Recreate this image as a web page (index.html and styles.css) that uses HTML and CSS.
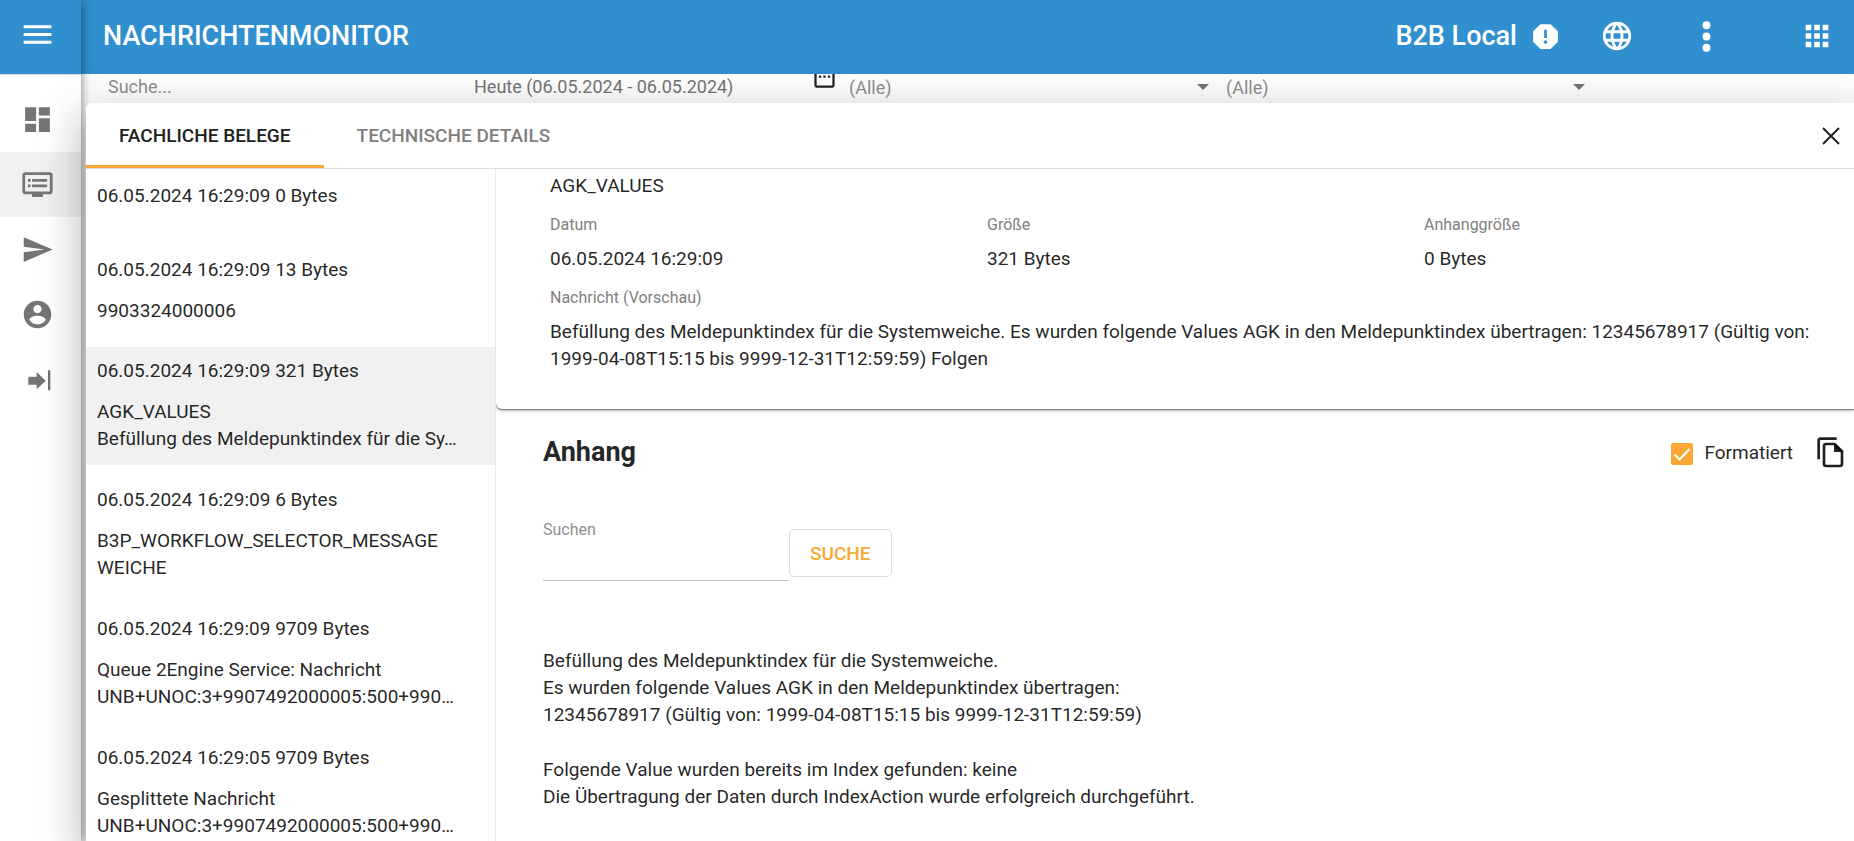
FILE: index.html
```html
<!DOCTYPE html>
<html lang="de">
<head>
<meta charset="utf-8">
<title>Nachrichtenmonitor</title>
<link rel="stylesheet" href="styles.css">
</head>
<body>
<div class="app">
  <aside class="sidebar">
    <div class="sidebar-head">
      <button class="icon-button" type="button" aria-label="Menü">
        <svg class="icon-lg" viewBox="0 0 24 24"><path d="M3 18h18v-2H3v2zm0-5h18v-2H3v2zm0-7v2h18V6H3z"/></svg>
      </button>
    </div>
    <nav class="nav">
      <a class="nav-item" href="#dashboard" aria-label="Dashboard">
        <svg class="icon" viewBox="0 0 24 24"><path d="M3 13h8V3H3v10zm0 8h8v-6H3v6zm10 0h8V11h-8v10zm0-18v6h8V3h-8z"/></svg>
      </a>
      <a class="nav-item nav-item-active" href="#monitor" aria-label="Nachrichtenmonitor">
        <svg class="icon" viewBox="0 0 24 24"><path d="M21 3H3c-1.1 0-2 .9-2 2v12c0 1.100.9 2 2 2h5v2h8v-2h5c1.100 0 2-.9 2-2V5c0-1.100-.9-2-2-2zm0 14H3V5h18v12zm-2-9H8v2h11V8zm0 4H8v2h11v-2zM7 8H5v2h2V8zm0 4H5v2h2v-2z"/></svg>
      </a>
      <a class="nav-item" href="#senden" aria-label="Senden">
        <svg class="icon" viewBox="0 0 24 24"><path d="M2 21L23 12 2 3v7l15 2-15 2z"/></svg>
      </a>
      <a class="nav-item" href="#konto" aria-label="Konto">
        <svg class="icon" viewBox="0 0 24 24"><path d="M12 2C6.480 2 2 6.480 2 12s4.480 10 10 10 10-4.480 10-10S17.520 2 12 2zm0 3c1.660 0 3 1.340 3 3s-1.340 3-3 3-3-1.340-3-3 1.340-3 3-3zm0 14.200c-2.500 0-4.710-1.280-6-3.220.03-1.990 4-3.080 6-3.080 1.990 0 5.970 1.090 6 3.080-1.290 1.940-3.500 3.220-6 3.220z"/></svg>
      </a>
      <a class="nav-item" href="#abmelden" aria-label="Abmelden">
        <svg class="icon" viewBox="0 0 99 99"><path d="M22 41h25V27l27 26-27 26V65H22zM81 22h7v60h-7z"/></svg>
      </a>
    </nav>
  </aside>

  <div class="main">
    <header class="topbar">
      <h1 class="topbar-title">NACHRICHTENMONITOR</h1>
      <div class="tenant">
        <span>B2B Local</span>
        <svg class="icon" viewBox="0 0 24 24"><path d="M15.730 3H8.270L3 8.270v7.460L8.270 21h7.460L21 15.730V8.270L15.730 3zM12 17.300c-.72 0-1.300-.58-1.300-1.300s.58-1.300 1.300-1.300 1.300.58 1.300 1.300-.58 1.300-1.300 1.300zm1-4.300h-2V7h2v6z"/></svg>
      </div>
      <div class="topbar-actions">
        <button class="icon-button" type="button" aria-label="Sprache">
          <svg class="icon-md" viewBox="0 0 24 24"><path d="M12 2C6.480 2 2 6.480 2 12s4.480 10 10 10 10-4.480 10-10S17.520 2 12 2zm6.930 6h-2.950c-.32-1.250-.78-2.450-1.380-3.560 1.840.63 3.370 1.910 4.330 3.560zM12 4.040c.83 1.200 1.480 2.530 1.910 3.960h-3.820c.43-1.430 1.080-2.760 1.910-3.960zM4.260 14C4.100 13.360 4 12.690 4 12s.1-1.360.26-2h3.380c-.08.66-.14 1.320-.14 2s.06 1.340.14 2H4.260zm.82 2h2.950c.32 1.250.78 2.450 1.380 3.560-1.840-.63-3.370-1.900-4.330-3.560zm2.950-8H5.080c.96-1.660 2.490-2.930 4.330-3.560C8.810 5.550 8.350 6.750 8.030 8zM12 19.960c-.83-1.200-1.480-2.530-1.910-3.960h3.820c-.43 1.430-1.080 2.760-1.910 3.960zM14.340 14H9.660c-.09-.66-.16-1.320-.16-2s.07-1.350.16-2h4.680c.09.65.16 1.320.16 2s-.07 1.340-.16 2zm.25 5.560c.6-1.110 1.060-2.310 1.380-3.560h2.950c-.96 1.650-2.490 2.930-4.330 3.560zM16.360 14c.08-.66.14-1.320.14-2s-.06-1.340-.14-2h3.380c.16.64.26 1.310.26 2s-.1 1.360-.26 2h-3.380z"/></svg>
        </button>
        <button class="icon-button more" type="button" aria-label="Mehr">
          <svg class="icon-xl" viewBox="0 0 24 24"><circle cx="12" cy="6" r="2.100"/><circle cx="12" cy="12" r="2.100"/><circle cx="12" cy="18" r="2.100"/></svg>
        </button>
        <button class="icon-button" type="button" aria-label="Apps">
          <svg class="icon-md" viewBox="0 0 24 24"><path d="M4 8h4V4H4v4zm6 12h4v-4h-4v4zm-6 0h4v-4H4v4zm0-6h4v-4H4v4zm6 0h4v-4h-4v4zm6-10v4h4V4h-4zm-6 4h4V4h-4v4zm6 6h4v-4h-4v4zm0 6h4v-4h-4v4z"/></svg>
        </button>
      </div>
    </header>

    <div class="workspace">
      <form class="filters">
        <input class="filter-input" type="text" placeholder="Suche..." aria-label="Suche">
        <div class="filter filter-range">
          <input class="filter-input filter-date" type="text" value="Heute (06.05.2024 - 06.05.2024)" aria-label="Zeitraum">
          <svg class="calendar" viewBox="0 0 24 24"><path d="M9 11H7v2h2v-2zm4 0h-2v2h2v-2zm4 0h-2v2h2v-2zm2-7h-1V2h-2v2H8V2H6v2H5c-1.100 0-2 .9-2 2v14c0 1.100.9 2 2 2h14c1.100 0 2-.9 2-2V6c0-1.100-.9-2-2-2zm0 16H5V9h14v11z"/></svg>
        </div>
        <div class="filter">
          <select class="filter-input" aria-label="Status"><option>(Alle)</option></select>
          <svg class="caret" viewBox="0 0 12 6"><path d="M0 0h12L6 6z"/></svg>
        </div>
        <div class="filter">
          <select class="filter-input" aria-label="Typ"><option>(Alle)</option></select>
          <svg class="caret" viewBox="0 0 12 6"><path d="M0 0h12L6 6z"/></svg>
        </div>
      </form>
    </div>

    <section class="dialog" role="dialog" aria-label="Nachrichtendetails">
      <div class="tabs" role="tablist">
        <button class="tab tab-active" type="button" role="tab" aria-selected="true">FACHLICHE BELEGE</button>
        <button class="tab" type="button" role="tab" aria-selected="false">TECHNISCHE DETAILS</button>
        <button class="icon-button close" type="button" aria-label="Schließen">
          <svg class="close-icon" viewBox="0 0 18 18"><path d="M1 1l16 16M17 1L1 17"/></svg>
        </button>
      </div>
      <div class="dialog-body">
        <ul class="messages">
          <li class="message">
            <p class="message-meta">06.05.2024 16:29:09 0 Bytes</p>
          </li>
          <li class="message">
            <p class="message-meta">06.05.2024 16:29:09 13 Bytes</p>
            <p class="message-name">9903324000006</p>
          </li>
          <li class="message message-active">
            <p class="message-meta">06.05.2024 16:29:09 321 Bytes</p>
            <p class="message-name">AGK_VALUES</p>
            <p class="message-preview">Befüllung des Meldepunktindex für die Sy…</p>
          </li>
          <li class="message">
            <p class="message-meta">06.05.2024 16:29:09 6 Bytes</p>
            <p class="message-name">B3P_WORKFLOW_SELECTOR_MESSAGE</p>
            <p class="message-preview">WEICHE</p>
          </li>
          <li class="message">
            <p class="message-meta">06.05.2024 16:29:09 9709 Bytes</p>
            <p class="message-name">Queue 2Engine Service: Nachricht</p>
            <p class="message-preview">UNB+UNOC:3+9907492000005:500+990…</p>
          </li>
          <li class="message">
            <p class="message-meta">06.05.2024 16:29:05 9709 Bytes</p>
            <p class="message-name">Gesplittete Nachricht</p>
            <p class="message-preview">UNB+UNOC:3+9907492000005:500+990…</p>
          </li>
        </ul>

        <div class="detail">
          <div class="card">
            <p class="card-name">AGK_VALUES</p>
            <dl class="facts">
              <div class="fact"><dt>Datum</dt><dd>06.05.2024 16:29:09</dd></div>
              <div class="fact"><dt>Größe</dt><dd>321 Bytes</dd></div>
              <div class="fact"><dt>Anhanggröße</dt><dd>0 Bytes</dd></div>
              <div class="fact fact-wide"><dt>Nachricht (Vorschau)</dt><dd>Befüllung des Meldepunktindex für die Systemweiche. Es wurden folgende Values AGK in den Meldepunktindex übertragen: 12345678917 (Gültig von: 1999-04-08T15:15 bis 9999-12-31T12:59:59) Folgen</dd></div>
            </dl>
          </div>

          <div class="attachment">
            <div class="attachment-head">
              <h2 class="attachment-title">Anhang</h2>
              <label class="check"><input class="check-box" type="checkbox" checked>Formatiert</label>
              <button class="icon-button" type="button" aria-label="Kopieren">
                <svg class="copy-icon" viewBox="0 0 81 93"><path class="copy-line" d="M5 67V11Q5 5 11 5H59"/><path class="copy-line" d="M27 21H53L75 43V81Q75 87 69 87H27Q21 87 21 81V27Q21 21 27 21z"/><path d="M51 18v27h27z"/></svg>
              </button>
            </div>
            <form class="search">
              <div class="search-field">
                <label class="search-label" for="suchen">Suchen</label>
                <input class="search-input" id="suchen" type="text">
              </div>
              <button class="search-button" type="button">SUCHE</button>
            </form>
            <div class="content">
              <p>Befüllung des Meldepunktindex für die Systemweiche.<br>Es wurden folgende Values AGK in den Meldepunktindex übertragen:<br>12345678917 (Gültig von: 1999-04-08T15:15 bis 9999-12-31T12:59:59)</p>
              <p>Folgende Value wurden bereits im Index gefunden: keine<br>Die Übertragung der Daten durch IndexAction wurde erfolgreich durchgeführt.</p>
            </div>
          </div>
        </div>
      </div>
    </section>
  </div>
</div>
</body>
</html>
```
FILE: styles.css
```css
*, *::before, *::after { box-sizing: border-box; }

body {
  margin: 0;
  background: #fff;
  color: rgba(0, 0, 0, .87);
  font: 400 19px/27px Roboto, "Liberation Sans", sans-serif;
}

h1, h2, p, ul, dl, dd { margin: 0; padding: 0; }
ul { list-style: none; }
svg { display: block; fill: currentColor; flex: none; }
button, input, select { font: inherit; color: inherit; }

.icon { width: 33px; height: 33px; }
.icon-md { width: 34px; height: 34px; }
.icon-lg { width: 37px; height: 37px; }
.icon-xl { width: 45px; height: 45px; }

.icon-button {
  padding: 0;
  border: 0;
  background: none;
  cursor: pointer;
}

.app {
  display: grid;
  grid-template-columns: 81px 1fr;
  height: 100vh;
  overflow: hidden;
}

/* Sidebar */
.sidebar {
  position: relative;
  z-index: 1;
  background: #fff;
  color: #757575;
  box-shadow: 0 0 10px rgba(0, 0, 0, .5);
}

.sidebar-head {
  position: relative;
  z-index: 2;
  display: flex;
  align-items: center;
  height: 74px;
  padding: 0 19px 5px;
  background: #308fcf;
  color: #fff;
}

.nav {
  padding-top: 12px;
  border-top: 1px solid #ddd;
}

.nav-item {
  display: flex;
  align-items: center;
  height: 65px;
  padding: 0 0 1px 21px;
  color: inherit;
}

.nav-item-active { background: #f1f1f1; }

/* Main column */
.main {
  position: relative;
  display: flex;
  flex-direction: column;
  min-width: 0;
}

.topbar {
  display: flex;
  align-items: center;
  height: 74px;
  padding: 0 20px 2px 22px;
  background: #308fcf;
  color: #fff;
}

.topbar-title {
  flex: 1;
  font-size: 27px;
  font-weight: 500;
}

.tenant {
  display: flex;
  align-items: center;
  gap: 12px;
  font-size: 27px;
  font-weight: 500;
}

.topbar-actions {
  display: flex;
  align-items: center;
  gap: 50px;
  margin-left: 38px;
}

.more { margin-right: 21px; }

.workspace {
  flex: 1;
  overflow: hidden;
}

.filters {
  display: grid;
  grid-template-columns: 366fr 375fr 377fr 376fr 252fr;
  padding-left: 27px;
  color: #757575;
}

.filter {
  display: flex;
  align-items: flex-start;
  padding-right: 17px;
}

.filter-range { padding-right: 11px; }

.filter-input {
  flex: 1;
  width: 100%;
  min-width: 0;
  height: 25px;
  padding: 0;
  border: 0;
  background: none;
  appearance: none;
  color: #8f8f8f;
  font-size: 18px;
}

.filter-input::placeholder { color: #8f8f8f; }
.filter-date { color: #757575; }

.calendar {
  width: 27px;
  height: 27px;
  margin-top: -11px;
  color: #222;
}

.caret {
  width: 12px;
  height: 6px;
  margin-top: 10px;
}

/* Dialog above the workspace */
.dialog {
  position: absolute;
  z-index: 2;
  inset: 103px 0 0 5px;
  display: flex;
  flex-direction: column;
  background: #fff;
  border-radius: 6px 0 0 0;
  box-shadow:
    0 11px 15px -7px rgba(0, 0, 0, .2),
    0 24px 38px 3px rgba(0, 0, 0, .14),
    0 9px 46px 8px rgba(0, 0, 0, .14);
}

.tabs {
  display: flex;
  height: 66px;
  border-bottom: 1px solid #ddd;
}

.tab {
  padding: 2px 33px 0;
  border: 0;
  border-bottom: 3px solid transparent;
  background: none;
  color: #808080;
  font-weight: 500;
}

.tab-active {
  border-bottom-color: #f9a933;
  color: #212121;
}

.close {
  margin-left: auto;
  padding-right: 14px;
  color: #212121;
}

.close-icon {
  width: 18px;
  height: 18px;
  stroke: currentColor;
  stroke-width: 2;
}

.dialog-body {
  display: flex;
  flex: 1;
  min-height: 0;
}

.messages {
  display: flex;
  flex: none;
  flex-direction: column;
  gap: 11px;
  width: 410px;
  padding-top: 3px;
  overflow: hidden;
  border-right: 1px solid #e8e8e8;
}

.message { padding: 10px 34px 12px 11px; }
.message-active { background: #f1f1f1; }
.message-meta { margin-bottom: 14px; }

.message-preview {
  line-height: 28px;
  white-space: nowrap;
}

/* Detail pane */
.detail {
  flex: 1;
  min-width: 0;
  overflow: hidden;
}

.card {
  padding: 3px 13px 37px 54px;
  border-radius: 0 0 0 6px;
  box-shadow:
    0 1px 0 rgba(0, 0, 0, .35),
    0 2px 2px rgba(0, 0, 0, .18),
    0 1px 6px rgba(0, 0, 0, .15);
}

.facts {
  display: grid;
  grid-template-columns: repeat(3, 1fr);
  gap: 12px 20px;
  margin-top: 12px;
}

.fact { display: grid; gap: 7px; }
.fact-wide { grid-column: 1 / -1; }

.fact dt {
  color: #808080;
  font-size: 16px;
}

.attachment { padding: 28px 10px 0 47px; }

.attachment-head {
  display: flex;
  align-items: center;
}

.attachment-title {
  flex: 1;
  font-size: 27px;
  font-weight: 700;
}

.check {
  display: flex;
  align-items: center;
  gap: 11px;
  margin-right: 24px;
}

.check-box {
  width: 22px;
  height: 22px;
  margin: 2px 0 0;
  border-radius: 2px;
  appearance: none;
  background: #f9a933 url("data:image/svg+xml,%3Csvg xmlns='http://www.w3.org/2000/svg' viewBox='0 0 22 22'%3E%3Cpath d='M3.500 11.500l5 5L18.500 6' fill='none' stroke='white' stroke-width='2'/%3E%3C/svg%3E");
}

.copy-icon { width: 27px; height: 31px; }

.copy-line {
  fill: none;
  stroke: currentColor;
  stroke-width: 8;
}

.search {
  display: flex;
  align-items: flex-start;
  gap: 1px;
  margin-top: 48px;
}

.search-field {
  display: flex;
  flex-direction: column;
  width: 245px;
}

.search-label {
  color: #8f8f8f;
  font-size: 16px;
}

.search-input {
  height: 38px;
  padding: 0;
  border: 0;
  border-bottom: 1px solid #bdbdbd;
  background: none;
}

.search-button {
  height: 48px;
  margin-top: 13px;
  padding: 0 20px;
  border: 1px solid #ddd;
  border-radius: 5px;
  background: #fff;
  color: #f9a933;
  font-weight: 500;
}

.content {
  display: grid;
  gap: 28px;
  margin-top: 66px;
}
```
